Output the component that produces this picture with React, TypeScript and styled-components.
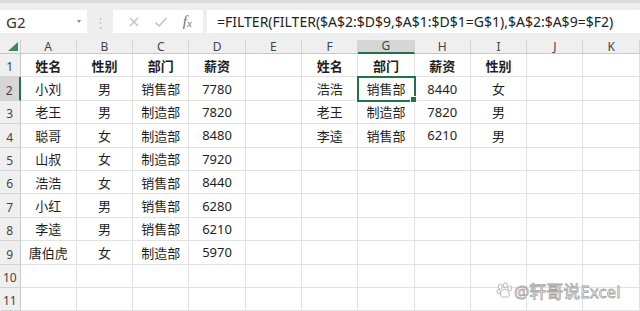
import React from "react";
import styled, { createGlobalStyle } from "styled-components";

const GlobalStyle = createGlobalStyle`
  html, body {
    margin: 0;
    padding: 0;
    background: #ffffff;
    overflow: hidden;
  }
  body {
    font-family: "Noto Sans", "Noto Sans CJK SC", sans-serif;
  }
`;

const COLS = ["A", "B", "C", "D", "E", "F", "G", "H", "I", "J", "K"];

type Cell = { text?: string; bold?: boolean };

const source: string[][] = [
  ["姓名", "性别", "部门", "薪资"],
  ["小刘", "男", "销售部", "7780"],
  ["老王", "男", "制造部", "7820"],
  ["聪哥", "女", "制造部", "8480"],
  ["山叔", "女", "制造部", "7920"],
  ["浩浩", "女", "销售部", "8440"],
  ["小红", "男", "销售部", "6280"],
  ["李逵", "男", "销售部", "6210"],
  ["唐伯虎", "女", "制造部", "5970"],
];

const result: string[][] = [
  ["姓名", "部门", "薪资", "性别"],
  ["浩浩", "销售部", "8440", "女"],
  ["老王", "制造部", "7820", "男"],
  ["李逵", "销售部", "6210", "男"],
];

const buildRows = (): Cell[][] => {
  const rows: Cell[][] = [];
  for (let r = 0; r < 11; r++) {
    const row: Cell[] = [];
    for (let c = 0; c < 11; c++) {
      let text: string | undefined;
      if (c < 4 && source[r]) text = source[r][c];
      if (c >= 5 && c < 9 && result[r]) text = result[r][c - 5];
      row.push({ text, bold: r === 0 });
    }
    rows.push(row);
  }
  return rows;
};

const App = () => {
  const rows = buildRows();
  return (
    <Page>
      <GlobalStyle />
      <TopStrip />
      <Toolbar>
        <NameBox>
          <span>G2</span>
          <Caret />
        </NameBox>
        <Grip>⋮</Grip>
        <FxBox>
          <FxIcon>
            <svg width="12" height="12" viewBox="0 0 12 12">
              <path d="M2 2 L10 10 M10 2 L2 10" stroke="#bdbdbd" strokeWidth="1.3" fill="none" />
            </svg>
          </FxIcon>
          <FxIcon>
            <svg width="14" height="12" viewBox="0 0 14 12">
              <path d="M1.5 6.5 L5 10 L12.5 2" stroke="#bdbdbd" strokeWidth="1.4" fill="none" />
            </svg>
          </FxIcon>
          <FxLabel>
            f<small>x</small>
          </FxLabel>
        </FxBox>
        <Formula>=FILTER(FILTER($A$2:$D$9,$A$1:$D$1=G$1),$A$2:$A$9=$F2)</Formula>
      </Toolbar>
      <Sheet>
        <Corner>
          <Triangle />
        </Corner>
        {COLS.map((c) => (
          <ColHead key={c} $active={c === "G"}>
            {c}
          </ColHead>
        ))}
        {rows.map((row, r) => (
          <React.Fragment key={r}>
            <RowHead $active={r === 1}>{r + 1}</RowHead>
            {row.map((cell, c) => (
              <DataCell key={c} $bold={cell.bold} $selected={r === 1 && c === 6}>
                {cell.text}
                {r === 1 && c === 6 && <Handle />}
              </DataCell>
            ))}
          </React.Fragment>
        ))}
        <Watermark>
          <svg width="17" height="17" viewBox="0 0 20 20">
            <g fill="#ffffff" stroke="#a8a8a8" strokeWidth="1">
              <ellipse cx="5" cy="5.5" rx="2.3" ry="3" />
              <ellipse cx="11" cy="3.8" rx="2.3" ry="3" />
              <ellipse cx="16.2" cy="7.5" rx="2.2" ry="2.8" />
              <ellipse cx="3.2" cy="11.5" rx="2" ry="2.5" />
              <path d="M10 8.5 C6.5 8.5 5 13 5.5 15.5 C6 18.5 9 18 10.5 17.5 C12 18 15 18.5 15.5 15.5 C16 13 13.5 8.5 10 8.5 Z" />
            </g>
          </svg>
          <WatermarkText>@轩哥说Excel</WatermarkText>
        </Watermark>
      </Sheet>
    </Page>
  );
};

export default App;

const Page = styled.div`
  width: 640px;
  height: 311px;
  overflow: hidden;
  background: #ffffff;
`;

const TopStrip = styled.div`
  height: 3px;
  background: #dcdcdc;
`;

const Toolbar = styled.div`
  height: 37px;
  background: #eeeeee;
  display: flex;
  align-items: flex-start;
  padding-top: 7px;
  box-sizing: border-box;
`;

const NameBox = styled.div`
  width: 87px;
  height: 23px;
  background: #ffffff;
  display: flex;
  align-items: center;
  justify-content: space-between;
  padding: 0 6px 0 6px;
  box-sizing: border-box;
  font-size: 15px;
  color: #333;
`;

const Caret = styled.span`
  width: 0;
  height: 0;
  border-left: 2.5px solid transparent;
  border-right: 2.5px solid transparent;
  border-top: 3px solid #888;
`;

const Grip = styled.div`
  width: 26px;
  height: 23px;
  display: flex;
  align-items: center;
  justify-content: center;
  color: #c4c4c4;
  font-size: 13px;
`;

const FxBox = styled.div`
  width: 90px;
  height: 23px;
  background: #ffffff;
  display: flex;
  align-items: center;
  justify-content: space-around;
  padding: 0 4px 0 8px;
  box-sizing: border-box;
`;

const FxIcon = styled.span`
  display: flex;
  align-items: center;
`;

const FxLabel = styled.span`
  font-family: "Liberation Serif", serif;
  font-style: italic;
  font-size: 15px;
  color: #6f6f6f;
  small {
    font-size: 11px;
    position: relative;
    top: 1px;
  }
`;

const Formula = styled.div`
  flex: 1;
  height: 23px;
  margin-left: 4px;
  background: #ffffff;
  padding-left: 10px;
  display: flex;
  align-items: center;
  font-size: 14px;
  color: #222;
  white-space: nowrap;
  overflow: hidden;
`;

const Sheet = styled.div`
  position: relative;
  display: grid;
  grid-template-columns: 20.5px repeat(11, 56.3px);
  grid-template-rows: 14px repeat(11, 23.4px);
`;

const Corner = styled.div`
  position: relative;
  background: #efefef;
  border-right: 1px solid #d0d0d0;
  border-bottom: 1px solid #c8c8c8;
`;

const Triangle = styled.div`
  position: absolute;
  right: 2px;
  bottom: 2px;
  width: 0;
  height: 0;
  border-left: 10px solid transparent;
  border-bottom: 9px solid #3f8a54;
`;

const ColHead = styled.div<{ $active?: boolean }>`
  background: ${({ $active }) => ($active ? "#d6d6d6" : "#efefef")};
  border-right: 1px solid #d4d4d4;
  border-bottom: ${({ $active }) => ($active ? "2px solid #217346" : "1px solid #c8c8c8")};
  box-sizing: border-box;
  display: flex;
  align-items: center;
  justify-content: center;
  font-size: 12px;
  color: #444;
  line-height: 1;
`;

const RowHead = styled.div<{ $active?: boolean }>`
  background: ${({ $active }) => ($active ? "#d6d6d6" : "#efefef")};
  border-right: ${({ $active }) => ($active ? "2px solid #217346" : "1px solid #c8c8c8")};
  border-bottom: 1px solid #d4d4d4;
  box-sizing: border-box;
  display: flex;
  align-items: flex-end;
  justify-content: center;
  padding-bottom: 3px;
  font-size: 12px;
  color: #444;
  line-height: 1;
`;

const DataCell = styled.div<{ $bold?: boolean; $selected?: boolean }>`
  position: relative;
  border-right: 1px solid #e2e2e2;
  border-bottom: 1px solid #e2e2e2;
  box-sizing: border-box;
  display: flex;
  align-items: center;
  justify-content: center;
  font-size: 13px;
  font-weight: ${({ $bold }) => ($bold ? 700 : 400)};
  color: #1e1e1e;
  white-space: nowrap;
  ${({ $selected }) =>
    $selected &&
    `
    outline: 2px solid #217346;
    outline-offset: -1px;
    z-index: 1;
  `}
`;

const Handle = styled.span`
  position: absolute;
  right: -3px;
  bottom: -3px;
  width: 5px;
  height: 5px;
  background: #217346;
  border: 1px solid #ffffff;
`;

const Watermark = styled.div`
  position: absolute;
  left: 496px;
  top: 238px;
  display: flex;
  align-items: center;
  gap: 1px;
  z-index: 2;
`;

const WatermarkText = styled.span`
  font-family: "Noto Sans", "Noto Sans CJK SC", sans-serif;
  font-size: 17px;
  color: #ffffff;
  -webkit-text-stroke: 0.8px #a4a4a4;
`;
